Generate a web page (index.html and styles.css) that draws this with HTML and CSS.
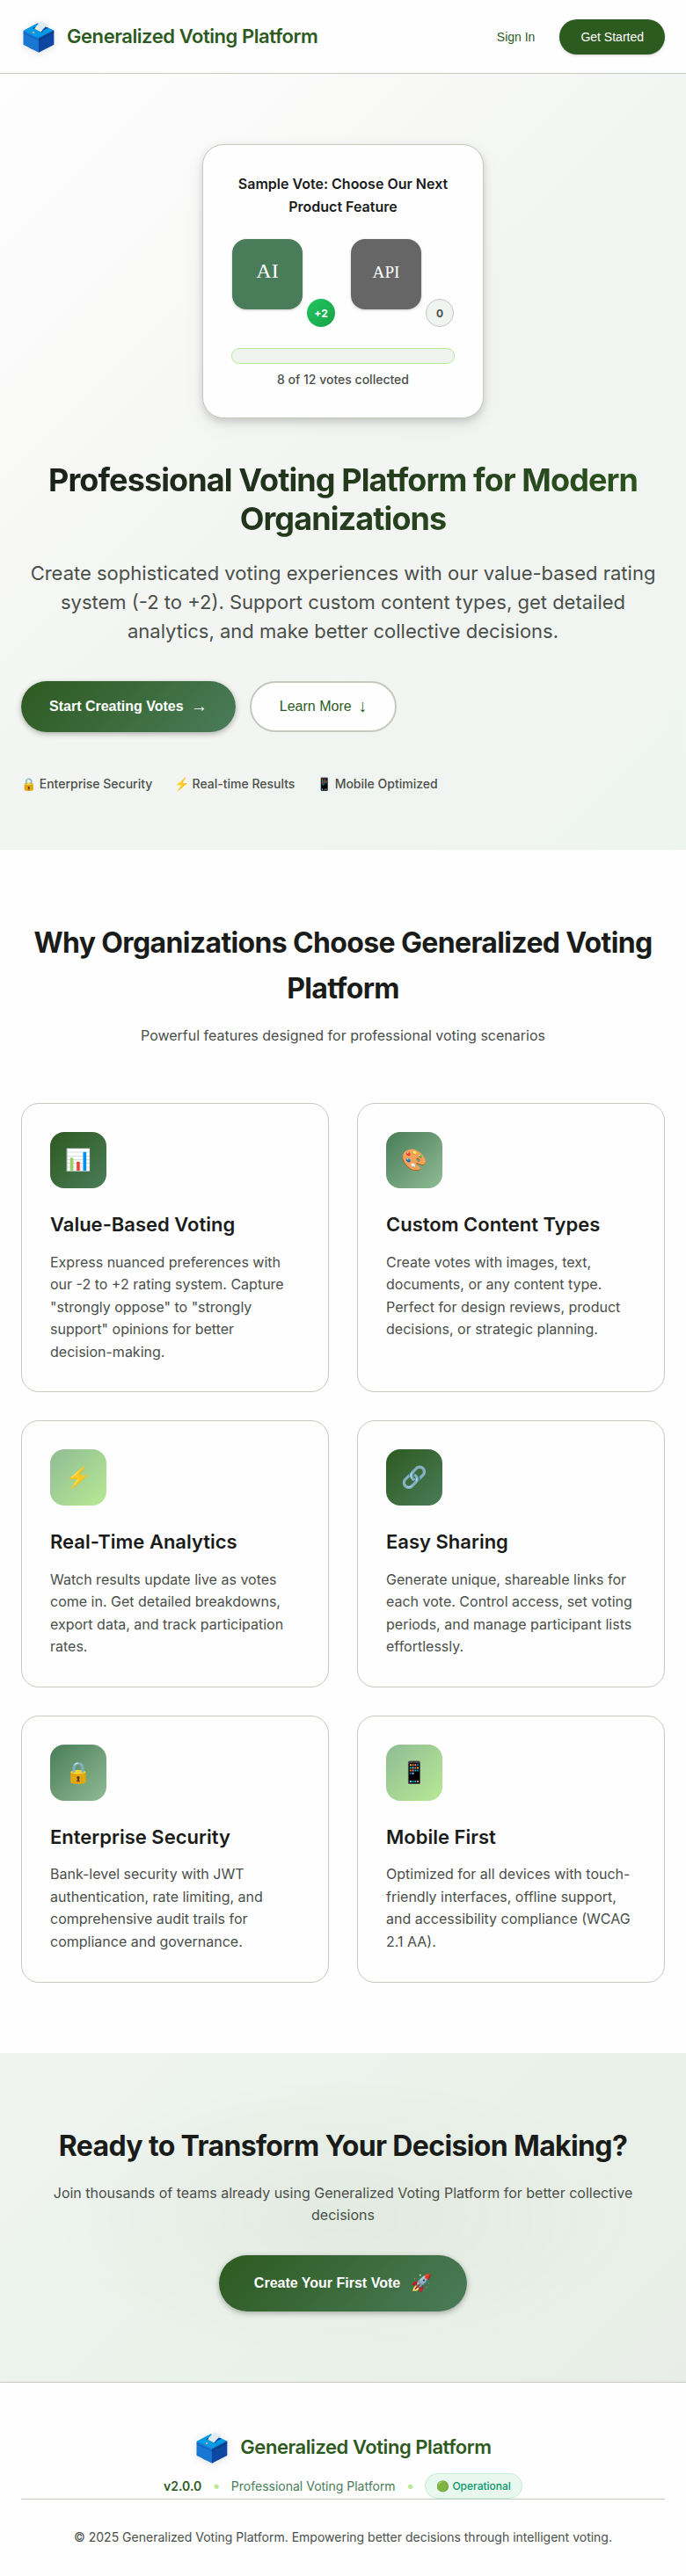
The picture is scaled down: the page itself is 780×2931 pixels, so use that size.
FILE: index.html
```html
<!DOCTYPE html>
<html lang="en">
<head>
<meta charset="utf-8">
<title>Generalized Voting Platform</title>
<link rel="stylesheet" href="styles.css">
</head>
<body>
<header class="header">
  <div class="logo"><span class="logo-icon">🗳️</span><span class="logo-text">Generalized Voting Platform</span></div>
  <nav class="nav">
    <button class="btn-link">Sign In</button>
    <button class="btn-small">Get Started</button>
  </nav>
</header>

<section class="hero">
  <div class="vote-card">
    <h3 class="vote-title">Sample Vote: Choose Our Next Product Feature</h3>
    <div class="vote-options">
      <div class="vote-option">
        <svg class="vote-image" viewBox="0 0 80 80"><rect width="80" height="80" fill="#4a7c59"/><text x="40" y="44" text-anchor="middle" font-size="24" fill="#fff">AI</text></svg>
        <span class="vote-badge vote-badge-positive">+2</span>
      </div>
      <div class="vote-option">
        <svg class="vote-image" viewBox="0 0 80 80"><rect width="80" height="80" fill="#666"/><text x="40" y="44" text-anchor="middle" font-size="19.2" fill="#fff">API</text></svg>
        <span class="vote-badge">0</span>
      </div>
    </div>
    <div class="progress"></div>
    <div class="progress-text">8 of 12 votes collected</div>
  </div>
  <h1 class="hero-title">Professional Voting Platform for Modern Organizations</h1>
  <p class="hero-text">Create sophisticated voting experiences with our value-based rating system (-2 to +2). Support custom content types, get detailed analytics, and make better collective decisions.</p>
  <div class="hero-actions">
    <button class="btn btn-primary">Start Creating Votes <span class="btn-arrow">→</span></button>
    <button class="btn btn-secondary">Learn More <span class="btn-arrow">↓</span></button>
  </div>
  <div class="trust">
    <span>🔒 Enterprise Security</span>
    <span>⚡ Real-time Results</span>
    <span>📱 Mobile Optimized</span>
  </div>
</section>

<section class="features">
  <h2 class="section-title">Why Organizations Choose Generalized Voting Platform</h2>
  <p class="section-text">Powerful features designed for professional voting scenarios</p>
  <div class="feature-grid">
    <article class="feature"><div class="feature-icon tone-dark">📊</div><h3 class="feature-title">Value-Based Voting</h3><p class="feature-text">Express nuanced preferences with our -2 to +2 rating system. Capture "strongly oppose" to "strongly support" opinions for better decision-making.</p></article>
    <article class="feature"><div class="feature-icon tone-mid">🎨</div><h3 class="feature-title">Custom Content Types</h3><p class="feature-text">Create votes with images, text, documents, or any content type. Perfect for design reviews, product decisions, or strategic planning.</p></article>
    <article class="feature"><div class="feature-icon tone-light">⚡</div><h3 class="feature-title">Real-Time Analytics</h3><p class="feature-text">Watch results update live as votes come in. Get detailed breakdowns, export data, and track participation rates.</p></article>
    <article class="feature"><div class="feature-icon tone-dark">🔗</div><h3 class="feature-title">Easy Sharing</h3><p class="feature-text">Generate unique, shareable links for each vote. Control access, set voting periods, and manage participant lists effortlessly.</p></article>
    <article class="feature"><div class="feature-icon tone-mid">🔒</div><h3 class="feature-title">Enterprise Security</h3><p class="feature-text">Bank-level security with JWT authentication, rate limiting, and comprehensive audit trails for compliance and governance.</p></article>
    <article class="feature"><div class="feature-icon tone-light">📱</div><h3 class="feature-title">Mobile First</h3><p class="feature-text">Optimized for all devices with touch-friendly interfaces, offline support, and accessibility compliance (WCAG 2.1 AA).</p></article>
  </div>
</section>

<section class="cta">
  <h2 class="section-title">Ready to Transform Your Decision Making?</h2>
  <p class="section-text">Join thousands of teams already using Generalized Voting Platform for better collective decisions</p>
  <button class="btn btn-primary btn-large">Create Your First Vote <span class="btn-rocket">🚀</span></button>
</section>

<footer class="footer">
  <div class="logo"><span class="logo-icon">🗳️</span><span class="logo-text">Generalized Voting Platform</span></div>
  <div class="version">
    <span class="version-number">v2.0.0</span><span class="dot">•</span><span class="version-name">Professional Voting Platform</span><span class="dot">•</span><span class="status">🟢 Operational</span>
  </div>
  <div class="copyright">© 2025 Generalized Voting Platform. Empowering better decisions through intelligent voting.</div>
</footer>
</body>
</html>
```
FILE: styles.css
```css
* { box-sizing: border-box; margin: 0; padding: 0; }
body { background: #fefefe; color: #1a1c1a; font-family: Inter, sans-serif; font-size: 16px; line-height: 1.6; }
button { border: 0; background: none; font-family: "Liberation Sans", Arial, sans-serif; }

.header { display: flex; justify-content: space-between; align-items: center; padding: 16px 24px; border-bottom: 1px solid #c5c9c0; }
.logo { display: flex; align-items: center; gap: 12px; }
.logo-icon { font-size: 32px; filter: drop-shadow(0 2px 4px rgba(0, 0, 0, .1)); }
.logo-text { font-size: 22px; font-weight: 600; letter-spacing: -0.02em; color: #2d5a1f; }
.nav { display: flex; align-items: center; gap: 12px; }
.btn-link { padding: 12px 16px; font-size: 14px; font-weight: 500; color: #2d5a1f; }
.btn-small { height: 40px; padding: 0 24px; border-radius: 20px; background: #2d5a1f; color: #fff; font-size: 14px; font-weight: 500; box-shadow: 0 1px 3px rgba(0, 0, 0, .2); }

.hero { padding: 80px 24px 64px; background: linear-gradient(135deg, #fefefe 0%, #f3f5f2 50%, #eef4f0 100%); }
.vote-card { width: 320px; margin: 0 auto 48px; padding: 32px; border: 1px solid #c5c9c0; border-radius: 24px; background: #fefefe; box-shadow: 0 4px 8px rgba(0, 0, 0, .15), 0 8px 24px rgba(0, 0, 0, .06); text-align: center; }
.vote-title { margin-bottom: 23px; font-size: 16px; font-weight: 600; }
.vote-options { display: grid; grid-template-columns: 1fr 1fr; gap: 16px; margin-bottom: 24px; }
.vote-option { position: relative; height: 101px; padding: 1px; text-align: left; }
.vote-image { display: block; width: 80px; height: 80px; border-radius: 16px; box-shadow: 0 1px 3px rgba(0, 0, 0, .2); font-family: "Liberation Serif", serif; }
.vote-badge { position: absolute; right: 1px; bottom: 0; display: flex; align-items: center; justify-content: center; width: 32px; height: 32px; border: 1px solid #c5c9c0; border-radius: 50%; background: #f0f4f0; color: #4a4f4a; font-size: 12px; font-weight: 700; }
.vote-badge-positive { border: 0; background: linear-gradient(135deg, #22c55e, #16a34a); color: #fff; }
.progress { height: 18px; margin-bottom: 8px; border: 1px solid #b8e994; border-radius: 9px; background: #f0f4f0; }
.progress-text { font-size: 14px; line-height: 20.6px; font-weight: 500; color: #4a4f4a; }
.hero-title { margin-bottom: 24px; font-size: 36px; font-weight: 700; line-height: 44px; letter-spacing: -0.025em; text-align: center; background: linear-gradient(135deg, #1a1c1a, #2d5a1f); -webkit-background-clip: text; background-clip: text; color: transparent; }
.hero-text { margin-bottom: 40px; font-size: 22px; line-height: 33px; text-align: center; color: #4a4f4a; }
.hero-actions { display: flex; gap: 16px; margin-bottom: 48px; }
.btn { display: inline-flex; align-items: center; gap: 8px; height: 58px; padding: 0 32px; border-radius: 32px; font-size: 16px; }
.btn-primary { background: linear-gradient(135deg, #2d5a1f, #4a7c59); color: #fff; font-weight: 600; box-shadow: 0 2px 6px rgba(0, 0, 0, .3); }
.btn-secondary { border: 2px solid #c5c9c0; background: #fefefe; color: #2d5a1f; font-weight: 500; }
.btn-arrow { font-size: 19.2px; }
.btn-large { gap: 12px; height: 64px; padding: 0 40px; vertical-align: top; }
.btn-rocket { font-size: 19.2px; }
.trust { display: flex; gap: 24.5px; font-size: 14px; font-weight: 500; color: #4a4f4a; }

.features { padding: 80px 24px; }
.section-title { margin-bottom: 16px; font-size: 32px; font-weight: 700; letter-spacing: -0.02em; text-align: center; }
.section-text { font-size: 16px; text-align: center; color: #4a4f4a; }
.feature-grid { display: grid; grid-template-columns: 1fr 1fr; gap: 32px; margin-top: 64px; }
.feature { padding: 32px; border: 1px solid #c5c9c0; border-radius: 20px; background: #fefefe; }
.feature-icon { display: flex; align-items: center; justify-content: center; width: 64px; height: 64px; margin-bottom: 24px; border-radius: 16px; font-size: 24px; }
.tone-dark { background: linear-gradient(135deg, #2d5a1f, #4a7c59); }
.tone-mid { background: linear-gradient(135deg, #4a7c59, #8fbc94); }
.tone-light { background: linear-gradient(135deg, #8fbc94, #b8e994); }
.feature-title { margin-bottom: 12px; font-size: 22px; font-weight: 600; }
.feature-text { font-size: 16px; color: #4a4f4a; }

.cta { padding: 80px 24px; text-align: center; background: radial-gradient(ellipse at 50% 50%, rgba(45, 90, 31, .05), transparent 60%), linear-gradient(135deg, #f0f4f1, #ebf2ea 50%, #e8eee7); }
.cta .section-text { margin-bottom: 32px; padding: 0 32px; }

.footer { padding: 48px 24px 31px; border-top: 1px solid #c5c9c0; }
.footer .logo { justify-content: center; }
.version { display: flex; align-items: center; justify-content: center; gap: 12px; padding-top: 4px; font-size: 14px; color: #4a7c59; }
.version-number { font-weight: 600; color: #2d5a1f; }
.dot { color: #b8e994; font-size: 17px; }
.status { padding: 4px 12px; border: 1px solid #c3ecd4; border-radius: 16px; background: #e8f8ef; color: #059669; font-size: 12px; font-weight: 500; }
.copyright { padding-top: 32px; border-top: 1px solid #c5c9c0; font-size: 14px; text-align: center; color: #4a4f4a; }
```
